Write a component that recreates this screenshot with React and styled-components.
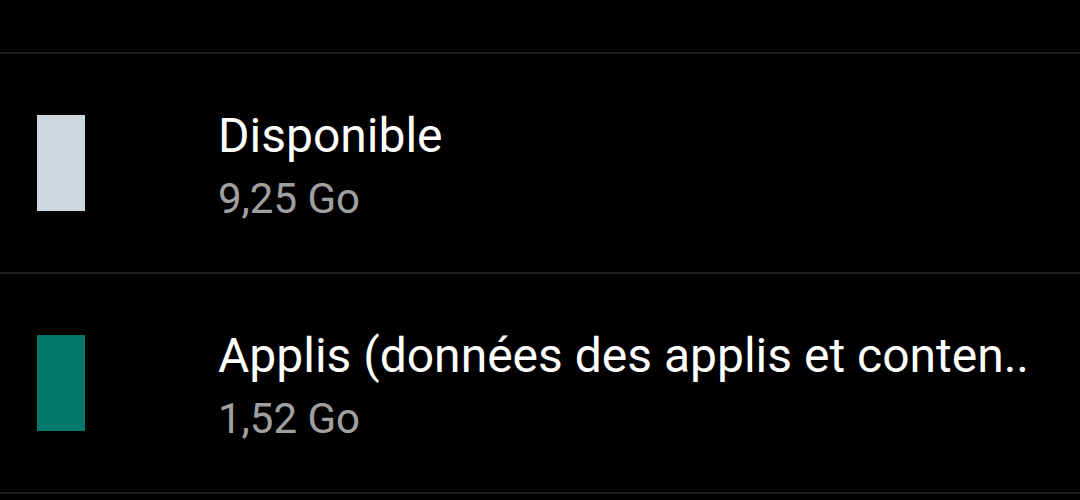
import styled, { createGlobalStyle } from "styled-components";

const GlobalStyle = createGlobalStyle`
  html, body {
    margin: 0;
    padding: 0;
    background: #000;
  }
  body {
    font-family: Roboto, "Noto Sans", sans-serif;
    -webkit-font-smoothing: antialiased;
  }
`;

const items = [
  { label: "Disponible", size: "9,25 Go", color: "#cfd8dc" },
  { label: "Applis (données des applis et conten..", size: "1,52 Go", color: "#00796b" },
];

export default function App() {
  return (
    <>
      <GlobalStyle />
      <Screen>
        <TopSpace />
        {items.map((item) => (
          <Row key={item.label}>
            <Swatch $color={item.color} />
            <TextBlock>
              <Title>{item.label}</Title>
              <Size>{item.size}</Size>
            </TextBlock>
          </Row>
        ))}
      </Screen>
    </>
  );
}

const Screen = styled.div`
  width: 1080px;
  height: 500px;
  background: #000;
  overflow: hidden;
  display: flex;
  flex-direction: column;
`;

const TopSpace = styled.div`
  height: 52px;
  border-bottom: 2px solid #1f1f1f;
  flex-shrink: 0;
`;

const Row = styled.div`
  height: 218px;
  flex-shrink: 0;
  display: flex;
  align-items: center;
  border-bottom: 2px solid #1f1f1f;
`;

const Swatch = styled.div`
  width: 48px;
  height: 96px;
  margin-left: 37px;
  margin-right: 133px;
  background: ${(p) => p.$color};
  flex-shrink: 0;
`;

const TextBlock = styled.div`
  display: flex;
  flex-direction: column;
`;

const Title = styled.div`
  color: #fff;
  font-size: 48px;
  line-height: 60px;
  white-space: nowrap;
`;

const Size = styled.div`
  color: #a0a0a0;
  font-size: 42px;
  line-height: 45px;
  margin-top: 10px;
  white-space: nowrap;
`;
